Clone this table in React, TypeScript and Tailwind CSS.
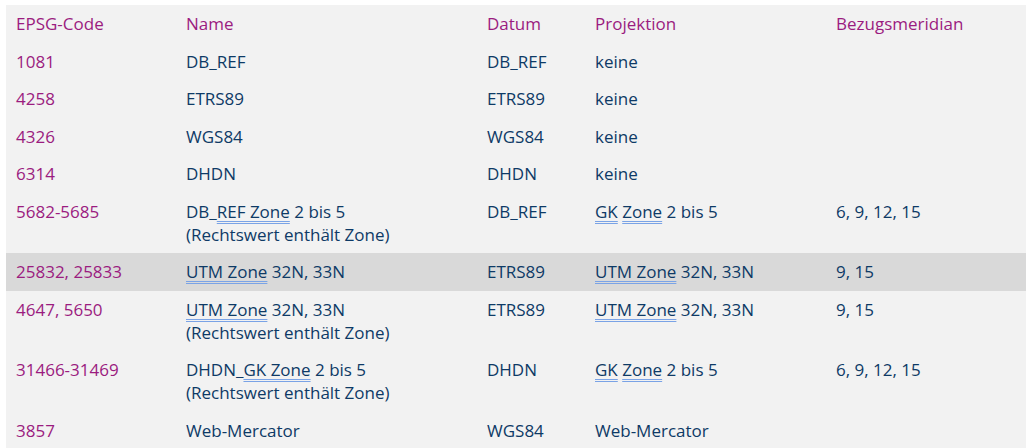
import React from 'react';

// kleine Hilfskomponente für die doppelt unterstrichenen Abkürzungen
const Abbr: React.FC<{ children: React.ReactNode }> = ({ children }) => (
  <span className="underline decoration-double decoration-[#7aa3e6] underline-offset-[3px] decoration-1">
    {children}
  </span>
);

interface Row {
  code: string;
  name: React.ReactNode;
  datum: string;
  projektion: React.ReactNode;
  meridian: string;
  highlight?: boolean;
}

const rows: Row[] = [
  { code: '1081', name: 'DB_REF', datum: 'DB_REF', projektion: 'keine', meridian: '' },
  { code: '4258', name: 'ETRS89', datum: 'ETRS89', projektion: 'keine', meridian: '' },
  { code: '4326', name: 'WGS84', datum: 'WGS84', projektion: 'keine', meridian: '' },
  { code: '6314', name: 'DHDN', datum: 'DHDN', projektion: 'keine', meridian: '' },
  {
    code: '5682-5685',
    name: (
      <>
        DB_<Abbr>REF Zone</Abbr> 2 bis 5
        <br />
        (Rechtswert enthält Zone)
      </>
    ),
    datum: 'DB_REF',
    projektion: (
      <>
        <Abbr>GK</Abbr> <Abbr>Zone</Abbr> 2 bis 5
      </>
    ),
    meridian: '6, 9, 12, 15',
  },
  {
    code: '25832, 25833',
    name: (
      <>
        <Abbr>UTM Zone</Abbr> 32N, 33N
      </>
    ),
    datum: 'ETRS89',
    projektion: (
      <>
        <Abbr>UTM Zone</Abbr> 32N, 33N
      </>
    ),
    meridian: '9, 15',
    highlight: true,
  },
  {
    code: '4647, 5650',
    name: (
      <>
        <Abbr>UTM Zone</Abbr> 32N, 33N
        <br />
        (Rechtswert enthält Zone)
      </>
    ),
    datum: 'ETRS89',
    projektion: (
      <>
        <Abbr>UTM Zone</Abbr> 32N, 33N
      </>
    ),
    meridian: '9, 15',
  },
  {
    code: '31466-31469',
    name: (
      <>
        DHDN_<Abbr>GK Zone</Abbr> 2 bis 5
        <br />
        (Rechtswert enthält Zone)
      </>
    ),
    datum: 'DHDN',
    projektion: (
      <>
        <Abbr>GK</Abbr> <Abbr>Zone</Abbr> 2 bis 5
      </>
    ),
    meridian: '6, 9, 12, 15',
  },
  { code: '3857', name: 'Web-Mercator', datum: 'WGS84', projektion: 'Web-Mercator', meridian: '' },
];

const cell = 'px-[10px] py-[7.25px] align-top text-left font-normal';

export default function App() {
  return (
    <div className="min-h-screen bg-white pl-[6px] pt-[5px] pr-px font-['Open_Sans',sans-serif] text-[17px] leading-[23px]">
      <table className="w-full table-fixed border-collapse bg-[#f2f2f2]">
        <colgroup>
          <col className="w-[170px]" />
          <col className="w-[301px]" />
          <col className="w-[108px]" />
          <col className="w-[241px]" />
          <col />
        </colgroup>
        <thead>
          <tr className="text-[#9b1c80]">
            <th className={cell}>EPSG-Code</th>
            <th className={cell}>Name</th>
            <th className={cell}>Datum</th>
            <th className={cell}>Projektion</th>
            <th className={cell}>Bezugsmeridian</th>
          </tr>
        </thead>
        <tbody>
          {rows.map((r) => (
            <tr key={r.code} className={r.highlight ? 'bg-[#d9d9d9]' : ''}>
              <td className={`${cell} text-[#9b1c80]`}>{r.code}</td>
              <td className={`${cell} text-[#0e3a66]`}>{r.name}</td>
              <td className={`${cell} text-[#0e3a66]`}>{r.datum}</td>
              <td className={`${cell} text-[#0e3a66]`}>{r.projektion}</td>
              <td className={`${cell} text-[#0e3a66]`}>{r.meridian}</td>
            </tr>
          ))}
        </tbody>
      </table>
    </div>
  );
}
